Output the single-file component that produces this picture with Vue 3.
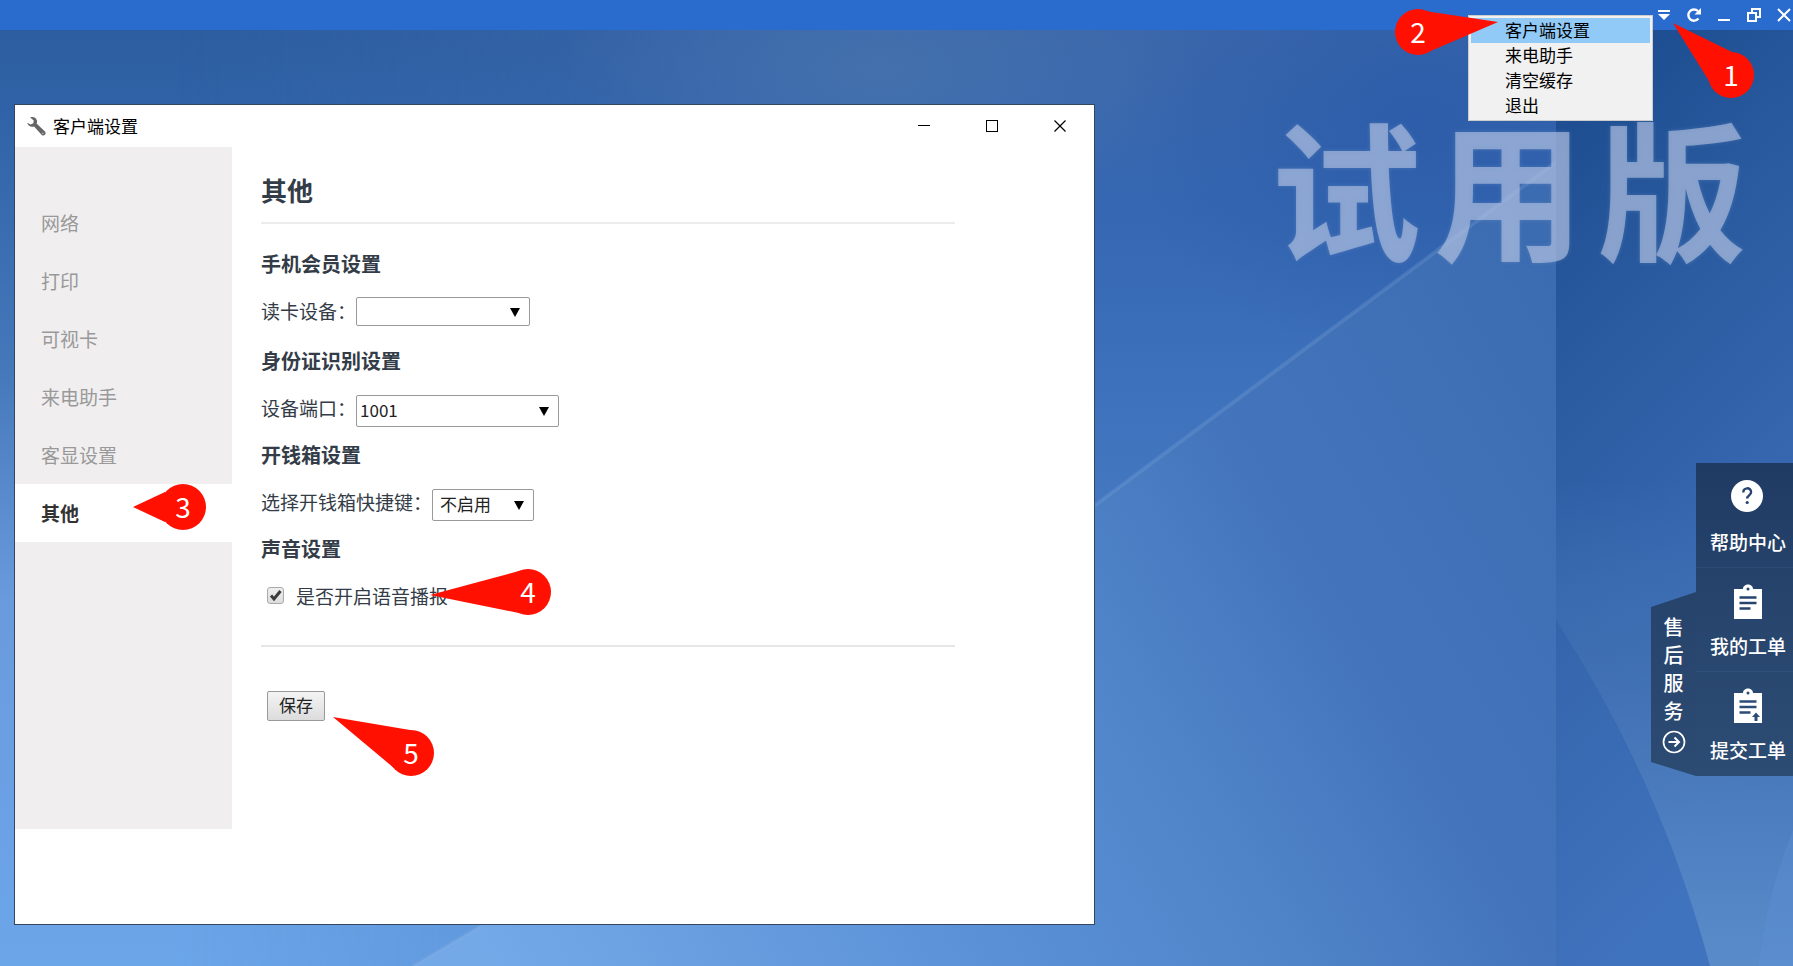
<script setup>
import { ref } from 'vue'

const menuItems = ['客户端设置', '来电助手', '清空缓存', '退出']
const sections = ['网络', '打印', '可视卡', '来电助手', '客显设置', '其他']
const current = ref('其他')
const reader = ref('')
const port = ref('1001')
const shortcut = ref('不启用')
const voice = ref(true)

const windowCallouts = [
  { n: 3, cx: 183, cy: 507, points: '133,507 165,492 183,507 165,522' },
  { n: 4, cx: 528, cy: 592, points: '430,595 519,571 528,592 519,613' },
  { n: 5, cx: 411, cy: 753, points: '333,717 410,730 411,753 394,768' }
]
const menuCallouts = [
  { n: 1, cx: 538, cy: 75, points: '480,23 539,52 538,75 516,81' },
  { n: 2, cx: 225, cy: 32, points: '305,22 232,11 225,32 240,50' }
]
</script>

<template>
  <div class="desktop">
    <svg class="wallpaper" viewBox="0 0 1793 966" preserveAspectRatio="none" aria-hidden="true">
      <defs>
        <linearGradient id="base" x1="0" y1="0" x2="0" y2="1">
          <stop offset="0" stop-color="#2b5c9e" />
          <stop offset=".11" stop-color="#3062a7" />
          <stop offset=".38" stop-color="#4577bb" />
          <stop offset=".62" stop-color="#6a9ade" />
          <stop offset="1" stop-color="#6ba6e9" />
        </linearGradient>
        <linearGradient id="east" x1="0" y1="0" x2="0" y2="1">
          <stop offset="0" stop-color="#3c67a9" />
          <stop offset=".22" stop-color="#3567b2" />
          <stop offset=".5" stop-color="#4277c0" />
          <stop offset="1" stop-color="#5086cc" />
        </linearGradient>
        <linearGradient id="fade" x1="0" y1="0" x2="1" y2="0">
          <stop offset=".1" stop-color="#000" />
          <stop offset=".58" stop-color="#fff" />
        </linearGradient>
        <mask id="eastMask"><rect width="1793" height="966" fill="url(#fade)" /></mask>
        <radialGradient id="glow">
          <stop offset="0" stop-color="#4470ad" />
          <stop offset="1" stop-color="#4470ad" stop-opacity="0" />
        </radialGradient>
        <radialGradient id="deep">
          <stop offset="0" stop-color="#2c5ca9" stop-opacity=".9" />
          <stop offset="1" stop-color="#2c5ca9" stop-opacity="0" />
        </radialGradient>
        <linearGradient id="beam" gradientUnits="userSpaceOnUse" x1="1540" y1="250" x2="450" y2="900">
          <stop offset="0" stop-color="#3b6bb0" />
          <stop offset=".14" stop-color="#4070b6" />
          <stop offset=".29" stop-color="#4475bc" />
          <stop offset=".45" stop-color="#4f84c8" />
          <stop offset=".65" stop-color="#5a90d6" />
          <stop offset="1" stop-color="#74a9e8" />
        </linearGradient>
        <linearGradient id="column" x1="0" y1="0" x2=".25" y2="1">
          <stop offset="0" stop-color="#1d4a8a" />
          <stop offset=".15" stop-color="#1f4f93" />
          <stop offset=".4" stop-color="#2b5ca1" />
          <stop offset=".65" stop-color="#3566ae" />
          <stop offset="1" stop-color="#4073bd" />
        </linearGradient>
        <linearGradient id="wedge" x1="0" y1="0" x2="0" y2="1">
          <stop offset="0" stop-color="#4473b4" stop-opacity="0" />
          <stop offset=".35" stop-color="#4473b4" stop-opacity=".6" />
          <stop offset=".75" stop-color="#4f80c1" />
          <stop offset="1" stop-color="#5a8bc9" />
        </linearGradient>
      </defs>
      <rect width="1793" height="966" fill="url(#base)" />
      <rect width="1793" height="966" fill="url(#east)" mask="url(#eastMask)" />
      <ellipse cx="880" cy="70" rx="320" ry="160" fill="url(#glow)" />
      <ellipse cx="1420" cy="120" rx="300" ry="240" fill="url(#deep)" />
      <path d="M1556 162L1094 506Q700 760 482 925L413 966H1556Z" fill="url(#beam)" />
      <path d="M1556 162L1094 506M482 925L413 966" stroke="#8fb3e0" stroke-opacity=".22" stroke-width="4" />
      <rect x="1556" width="237" height="966" fill="url(#column)" />
      <path d="M1556 620Q1660 780 1710 966H1793V480H1556Z" fill="url(#wedge)" />
      <path d="M1793 830Q1768 890 1758 966H1793Z" fill="#5f94dc" fill-opacity=".3" />
    </svg>

    <header class="appbar">
      <button type="button" class="tool" aria-label="菜单">
        <svg width="14" height="14" viewBox="0 0 14 14"><path d="M1 2h12v2H1zM1 6h12l-6 6z" fill="#fff" /></svg>
      </button>
      <button type="button" class="tool" aria-label="刷新">
        <svg width="16" height="16" viewBox="0 0 16 16"><path d="M12.4 11.5A5.6 5.6 0 1 1 12 4.2" fill="none" stroke="#fff" stroke-width="2.4" /><path d="M15 1v6.500H8.500z" fill="#fff" /></svg>
      </button>
      <button type="button" class="tool" aria-label="最小化">
        <svg width="14" height="14" viewBox="0 0 14 14"><path d="M1 11h12v2H1z" fill="#fff" /></svg>
      </button>
      <button type="button" class="tool" aria-label="还原">
        <svg width="14" height="14" viewBox="0 0 14 14" fill="none" stroke="#fff" stroke-width="2"><path d="M1 5h8v8H1zM5 4V1h8v8h-3" /></svg>
      </button>
      <button type="button" class="tool" aria-label="关闭">
        <svg width="14" height="14" viewBox="0 0 14 14" stroke="#fff" stroke-width="2"><path d="M1 1l12 12M13 1L1 13" /></svg>
      </button>
    </header>

    <div class="watermark" aria-hidden="true"><span>试</span><span>用</span><span>版</span></div>

    <nav class="popup">
      <button v-for="(item, i) in menuItems" :key="item" type="button" class="popup-item" :class="{ active: i === 0 }">{{ item }}</button>
    </nav>

    <main class="window">
      <div class="titlebar">
        <svg class="wrench" width="19" height="19" viewBox="0 0 18 18"><path d="M3 0.500C5.500-.5 8.500.5 9.300 3c.4 1.200.2 2.200-.2 3.100l7.900 7.600c1.800 1.900-.7 5.200-3 3.300L6.700 8.900C4 9.800 1 8.700.2 5.400L3.300 7l2.700-1 .4-2.800z" fill="#666" /><circle cx="15" cy="15.500" r="0.900" fill="#aaa" /></svg>
        <span class="window-title">客户端设置</span>
        <button type="button" class="win-btn" aria-label="最小化窗口">
          <svg width="12" height="12"><path d="M0 5h12v1H0z" /></svg>
        </button>
        <button type="button" class="win-btn" aria-label="最大化窗口">
          <svg width="12" height="12"><rect x=".5" y=".5" width="11" height="11" fill="none" stroke="#000" /></svg>
        </button>
        <button type="button" class="win-btn" aria-label="关闭窗口">
          <svg width="12" height="12"><path d="M.5.5l11 11M11.500.5l-11 11" stroke="#000" stroke-width="1.200" /></svg>
        </button>
      </div>

      <div class="body">
        <nav class="sidebar">
          <button v-for="s in sections" :key="s" type="button" class="side-item" :class="{ active: s === current }" @click="current = s">{{ s }}</button>
        </nav>

        <form class="content" @submit.prevent>
          <h1>其他</h1>

          <section class="first">
            <h2>手机会员设置</h2>
            <div class="row">
              <label for="reader">读卡设备：</label>
              <span class="picker reader">
                <select id="reader" v-model="reader"><option value=""></option></select>
                <svg class="arrow" width="10" height="9"><path d="M0 0h10L5 9z" /></svg>
              </span>
            </div>
          </section>

          <section>
            <h2>身份证识别设置</h2>
            <div class="row">
              <label for="port">设备端口：</label>
              <span class="picker tall port">
                <select id="port" v-model="port"><option>1001</option></select>
                <svg class="arrow" width="10" height="9"><path d="M0 0h10L5 9z" /></svg>
              </span>
            </div>
          </section>

          <section>
            <h2>开钱箱设置</h2>
            <div class="row">
              <label for="shortcut">选择开钱箱快捷键：</label>
              <span class="picker tall shortcut">
                <select id="shortcut" v-model="shortcut"><option>不启用</option></select>
                <svg class="arrow" width="10" height="9"><path d="M0 0h10L5 9z" /></svg>
              </span>
            </div>
          </section>

          <section>
            <h2>声音设置</h2>
            <div class="row voice">
              <span class="check">
                <input id="voice" v-model="voice" type="checkbox" />
                <svg v-if="voice" width="17" height="17" viewBox="0 0 17 17"><path d="M4 8.500l3 3.500 6.500-8" fill="none" stroke="#3c3c3c" stroke-width="3" /></svg>
              </span>
              <label for="voice">是否开启语音播报</label>
            </div>
          </section>

          <div class="actions"><button type="submit" class="save">保存</button></div>
        </form>
      </div>
    </main>

    <aside class="service">
      <button type="button" class="tab">
        <span>售</span><span>后</span><span>服</span><span>务</span>
        <svg width="24" height="24" viewBox="0 0 24 24" fill="none" stroke="#fff"><circle cx="12" cy="12" r="10.500" stroke-width="1.700" /><path d="M6.500 12h10M12.500 7.500L17 12l-4.500 4.500" stroke-width="2" /></svg>
      </button>
      <div class="links">
        <a href="#help">
          <svg width="34" height="36" viewBox="0 0 34 36"><circle cx="16" cy="18" r="16" fill="#fff" /><path d="M12.300 14.500c0-5.500 7.800-5.500 7.800-.4 0 3.300-3.900 3.300-3.900 6.500" fill="none" stroke="#27446f" stroke-width="2.400" /><circle cx="16.200" cy="24.500" r="1.600" fill="#27446f" /></svg>
          <span>帮助中心</span>
        </a>
        <a href="#orders">
          <svg class="clip" width="28" height="36" viewBox="0 0 28 36"><path d="M0 5h9c0-6 10-6 10 0h9v30H0z" fill="#fff" /><circle cx="14" cy="5" r="1.500" fill="#27446f" /><path d="M5.500 13.500h17M5.500 19h17M5.500 24.500h11" stroke="#27446f" stroke-width="2.500" /></svg>
          <span>我的工单</span>
        </a>
        <a href="#submit">
          <svg class="clip" width="28" height="36" viewBox="0 0 28 36"><path d="M0 5h9c0-6 10-6 10 0h9v30H0z" fill="#fff" /><circle cx="14" cy="5" r="1.500" fill="#2c4b76" /><path d="M5.500 13.500h17M5.500 19h17M5.500 24.500h11" stroke="#2c4b76" stroke-width="2.500" /><path d="M22 24.500l4 4.500h-2.500v4h-3v-4H18z" fill="#2c4b76" /></svg>
          <span>提交工单</span>
        </a>
      </div>
    </aside>

    <svg class="callouts left" width="600" height="800">
      <g v-for="c in windowCallouts" :key="c.n">
        <polygon :points="c.points" fill="#ff1000" />
        <circle :cx="c.cx" :cy="c.cy" r="23" fill="#ff1000" />
        <text :x="c.cx" :y="c.cy + 11">{{ c.n }}</text>
      </g>
    </svg>
    <svg class="callouts right" width="600" height="110">
      <g v-for="c in menuCallouts" :key="c.n">
        <polygon :points="c.points" fill="#ff1000" />
        <circle :cx="c.cx" :cy="c.cy" r="23" fill="#ff1000" />
        <text :x="c.cx" :y="c.cy + 11">{{ c.n }}</text>
      </g>
    </svg>
  </div>
</template>

<style>
html, body, #app { height: 100%; }
</style>

<style scoped>
.desktop {
  position: relative;
  min-height: 100%;
  overflow: hidden;
  box-sizing: border-box;
  padding-bottom: 41px;
  background: #4a7cc2;
  color: #333c47;
  font-family: "Noto Sans CJK SC", sans-serif;
}
.desktop * { box-sizing: border-box; }
button, select { font-family: inherit; margin: 0; }
button { border: 0; background: none; padding: 0; }
.wallpaper { position: absolute; inset: 0; width: 100%; height: 100%; }

.appbar {
  position: relative;
  display: flex;
  justify-content: flex-end;
  gap: 12px;
  height: 30px;
  background: #2a6bce;
}
.tool { width: 18px; display: flex; align-items: center; justify-content: center; }

.watermark {
  position: absolute;
  top: 110px;
  right: 46px;
  display: flex;
  gap: 13px;
  font-size: 150px;
  line-height: 150px;
  font-weight: 700;
  color: rgba(180, 196, 226, .62);
  text-shadow: 0 0 4px rgba(150, 180, 225, .25);
}

.popup {
  position: absolute;
  top: 15px;
  right: 140px;
  width: 185px;
  padding: 2px;
  border: 1px solid #ccc;
  background: #f1f1f1;
  display: flex;
  flex-direction: column;
}
.popup-item {
  height: 25px;
  padding: 0 0 2px 34px;
  text-align: left;
  font-size: 17px;
  line-height: 23px;
  color: #000;
}
.popup-item.active { background: #91c9f7; }

.window {
  position: relative;
  width: min(1081px, calc(100% - 28px));
  margin: 74px 0 0 14px;
  padding-bottom: 95px;
  border: 1px solid #34455f;
  background: #fff;
}
.titlebar { display: flex; align-items: center; height: 42px; }
.wrench { margin: 0 7px 0 12px; }
.window-title { flex: 1; padding-bottom: 2px; font-size: 17px; color: #000; }
.win-btn { width: 68px; height: 42px; display: flex; align-items: center; justify-content: center; }

.body { display: flex; }
.sidebar {
  width: 217px;
  flex: none;
  min-height: 682px;
  padding-top: 47px;
  background: #f0eeef;
  display: flex;
  flex-direction: column;
}
.side-item {
  height: 58px;
  padding: 0 0 2px 26px;
  text-align: left;
  font-size: 19px;
  color: #999;
}
.side-item.active { background: #fff; color: #333; font-weight: 700; }

.content { flex: 1; margin: 26px 139px 0 29px; }
h1 {
  margin: 0 0 17px;
  padding-bottom: 15px;
  border-bottom: 2px solid #ececec;
  font-size: 26px;
  line-height: 34px;
}
h2 { margin: 0; padding-bottom: 2px; font-size: 20px; line-height: 45px; }
.first { margin-bottom: 3px; }
.row { display: flex; align-items: center; height: 47px; font-size: 19px; }
.row label { padding-bottom: 2px; }
.picker { position: relative; height: 29px; }
.picker select {
  appearance: none;
  display: block;
  width: 100%;
  height: 100%;
  padding: 0 24px 2px 3px;
  border: 1px solid #999;
  border-radius: 2px;
  background: #fff;
  font-size: 17px;
  color: #222;
}
.tall { height: 32px; margin-top: 4px; }
.reader { width: 174px; }
.port { width: 203px; }
.shortcut { width: 102px; }
.picker.shortcut select { padding-left: 7px; }
.arrow { position: absolute; right: 10px; top: calc(50% - 4px); pointer-events: none; }
.voice { gap: 12px; padding: 0 0 3px 6px; }
.voice label { padding: 0; }
.check { position: relative; width: 17px; height: 17px; }
.check input {
  appearance: none;
  display: block;
  width: 17px;
  height: 17px;
  margin: 0;
  border: 1px solid #aaa;
  border-radius: 3px;
  background: linear-gradient(#eee, #ddd);
}
.check svg { position: absolute; inset: 0; pointer-events: none; }
.actions { margin-top: 25px; padding: 44px 0 0 6px; border-top: 2px solid #e6e6e6; }
.save {
  width: 58px;
  height: 30px;
  padding-bottom: 3px;
  border: 1px solid #999;
  border-radius: 2px;
  background: linear-gradient(#f4f4f4, #dcdcdc);
  font-size: 17px;
  line-height: 25px;
  color: #222;
}

.service { position: absolute; top: 463px; right: 0; display: flex; align-items: flex-start; color: #fff; }
.tab {
  width: 45px;
  height: 184px;
  margin-top: 129px;
  padding: 21px 0 0;
  background: linear-gradient(#26436b, #2c4b73);
  clip-path: polygon(0 15px, 100% 0, 100% 100%, 0 170px);
  display: flex;
  flex-direction: column;
  align-items: center;
  font-size: 20px;
  line-height: 28px;
  font-weight: 500;
  color: #fff;
}
.tab svg { margin-top: 5px; }
.links { width: 97px; background: linear-gradient(#203b63, #27456d 50%, #2d4c73); }
.links a {
  display: flex;
  flex-direction: column;
  align-items: center;
  height: 104px;
  padding: 15px 0 0 7px;
  color: #fff;
  font-size: 19px;
  line-height: 28px;
  font-weight: 500;
  text-decoration: none;
  white-space: nowrap;
}
.links a + a { padding-top: 16px; border-top: 1px solid rgba(90, 125, 175, .15); }
.links span { margin-top: 14px; }
.links a + a span { margin-top: 12px; }
.links a:last-child { height: 105px; }

.callouts { position: absolute; top: 0; pointer-events: none; }
.callouts text { font-family: "Noto Sans CJK SC", sans-serif; font-size: 28px; fill: #fff; text-anchor: middle; }
.callouts.left { left: 0; }
.callouts.right { right: 0; }
</style>
